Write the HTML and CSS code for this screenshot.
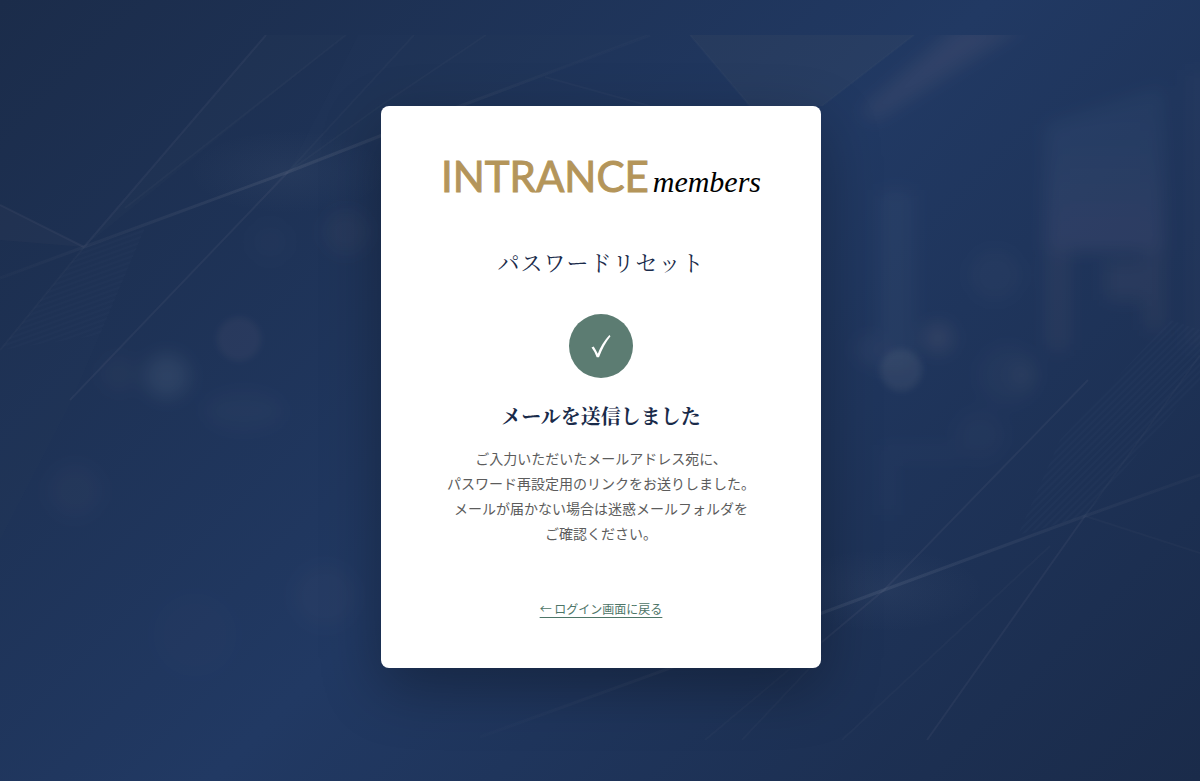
FILE: index.html
```html
<!DOCTYPE html>
<html lang="ja">
<head>
<meta charset="utf-8">
<meta name="viewport" content="width=device-width, initial-scale=1">
<title>パスワードリセット</title>
<link rel="stylesheet" href="styles.css">
</head>
<body>
<div class="page">
  <svg class="backdrop" viewBox="0 0 1200 781" preserveAspectRatio="xMidYMid slice" aria-hidden="true">
    <defs>
      <filter id="soft" x="-50%" y="-50%" width="200%" height="200%"><feGaussianBlur stdDeviation="9"/></filter>
      <filter id="edge" x="-50%" y="-50%" width="200%" height="200%"><feGaussianBlur stdDeviation="3"/></filter>
      <linearGradient id="pane" x1="0" y1="0" x2="0" y2="1"><stop offset="0" stop-color="#6f9cc0" stop-opacity=".05"/><stop offset="1" stop-color="#9a83a5" stop-opacity=".13"/></linearGradient>
      <linearGradient id="ray" gradientUnits="userSpaceOnUse" x1="0" y1="270" x2="560" y2="35"><stop offset="0" stop-color="#c5b8b8" stop-opacity=".02"/><stop offset=".5" stop-color="#c8c4c8" stop-opacity=".1"/><stop offset="1" stop-color="#c5b8b8" stop-opacity=".02"/></linearGradient>
      <linearGradient id="ray2" gradientUnits="userSpaceOnUse" x1="480" y1="740" x2="1200" y2="475"><stop offset="0" stop-color="#c5b8b8" stop-opacity=".01"/><stop offset=".55" stop-color="#c0c4d0" stop-opacity=".1"/><stop offset="1" stop-color="#c5b8b8" stop-opacity=".03"/></linearGradient>
      <radialGradient id="glow"><stop offset="0" stop-color="#b0b8c5" stop-opacity=".05"/><stop offset="1" stop-color="#b0b8c5" stop-opacity="0"/></radialGradient>
      <pattern id="hatchL" width="8" height="5" patternUnits="userSpaceOnUse" patternTransform="rotate(-20)"><path d="M0 1H8" stroke="#b8bccb" stroke-opacity=".018" stroke-width="2"/></pattern>
      <pattern id="hatchR" width="8" height="5" patternUnits="userSpaceOnUse" patternTransform="rotate(-45)"><path d="M0 1H8" stroke="#90a8cb" stroke-opacity=".03" stroke-width="2"/></pattern>
      <clipPath id="scene"><rect y="35" width="1200" height="705"/></clipPath>
    </defs>
    <g clip-path="url(#scene)">
      <path d="M266 35H346L84 247Z" fill="#b8bccb" fill-opacity=".014"/>
      <path d="M358 35H650L380 140 288 172Z" fill="#b8bccb" fill-opacity=".012"/>
      <path d="M690 35H914L822 106H750Z" fill="#b8a880" fill-opacity=".048"/>
      <path d="M0 205L84 247 0 240Z" fill="#b08a9a" fill-opacity=".035"/>
      <path d="M84 247L145 228 72 400 0 540V350Z" fill="#b8bccb" fill-opacity=".012"/>
      <path d="M84 247L145 228 100 335 0 350Z" fill="url(#hatchL)"/>
      <path d="M1170 320L1200 330V380L1085 516 1018 535 1060 440Z" fill="url(#hatchR)"/>
      <ellipse cx="288" cy="172" rx="100" ry="42" fill="url(#glow)"/>
      <ellipse cx="884" cy="590" rx="100" ry="42" fill="url(#glow)"/>
      <g filter="url(#soft)">
        <path d="M860 112L960 25H1025L875 120Z" fill="#b79595" fill-opacity=".1"/>
        <path d="M1046 125L1164 85V250H1046Z" fill="url(#pane)"/>
        <path d="M1048 250H1068V350H1048ZM1105 262H1150V300H1105ZM1145 250H1164V330H1145Z" fill="#b79595" fill-opacity=".07"/>
        <rect x="1185" y="70" width="30" height="280" fill="#ac9ab0" fill-opacity=".03"/>
        <rect x="878" y="190" width="36" height="180" fill="#8799c0" fill-opacity=".06"/>
        <path d="M880 445H960V460H895V515H880Z" fill="#8799c0" fill-opacity=".03"/>
        <circle cx="167" cy="376" r="22" fill="#8aa0b4" fill-opacity=".13"/>
        <circle cx="119" cy="374" r="19" fill="#aa8d9d" fill-opacity=".04"/>
        <ellipse cx="244" cy="411" rx="40" ry="20" fill="#a5a5ad" fill-opacity=".04"/>
        <circle cx="346" cy="232" r="23" fill="#b19090" fill-opacity=".06"/>
        <circle cx="270" cy="242" r="22" fill="#b19090" fill-opacity=".02"/>
        <circle cx="75" cy="491" r="28" fill="#b1a5a0" fill-opacity=".03"/>
        <circle cx="325" cy="596" r="32" fill="#b1a5a0" fill-opacity=".03"/>
        <circle cx="195" cy="635" r="42" fill="#9a88b0" fill-opacity=".015"/>
        <circle cx="995" cy="275" r="26" fill="#b1a5a0" fill-opacity=".035"/>
        <circle cx="938" cy="338" r="15" fill="#b19a9a" fill-opacity=".12"/>
        <circle cx="870" cy="350" r="15" fill="#a090b0" fill-opacity=".06"/>
        <circle cx="1008" cy="375" r="30" fill="#a090b0" fill-opacity=".04"/>
        <circle cx="1022" cy="375" r="11" fill="#b1a590" fill-opacity=".07"/>
        <circle cx="980" cy="435" r="25" fill="#a090b0" fill-opacity=".03"/>
      </g>
      <g filter="url(#edge)">
        <circle cx="239" cy="339" r="22" fill="#b19aa5" fill-opacity=".065"/>
        <circle cx="901" cy="370" r="21" fill="#a5a5a8" fill-opacity=".1"/>
      </g>
      <g fill="none" stroke-width="2" stroke="#c8bdc8" stroke-opacity=".06">
        <path stroke="url(#ray)" stroke-opacity="1" stroke-width="3" d="M0 278L84 247 288 172 380 136 650 35"/>
        <path stroke="url(#ray2)" stroke-opacity="1" stroke-width="3" d="M480 737L822 613 884 590 1085 516 1200 475"/>
        <path d="M266 35L84 247M0 205L84 247M288 172L70 400M1085 516L927 740M822 642L884 590 1088 380"/>
        <path stroke-opacity=".03" d="M690 35L750 106M346 35L125 208M84 247L0 350M414 35L288 172M486 35L380 106 288 172M545 77L650 106M914 35L822 106M822 655L742 740M705 740L822 642M1085 516L1200 553M1085 516L1200 355M1050 546L842 740"/>
      </g>
    </g>
  </svg>
  <main class="card">
    <div class="logo" role="img" aria-label="INTRANCE members">
      <span class="logo-name">INTRANCE</span><span class="logo-sub">members</span>
    </div>
    <h1 class="title">パスワードリセット</h1>
    <div class="badge">
      <svg class="check" viewBox="0 0 24 28" aria-hidden="true"><path d="M2.500 15.500L4.700 14.400Q7 18 8.800 21.800Q12.500 11.500 20.400 3L21.500 4.200Q14.500 13 10 25.200H7.700Q6 20 2.500 15.500Z"/></svg>
    </div>
    <h2 class="subtitle">メールを送信しました</h2>
    <p class="message">ご入力いただいたメールアドレス宛に、<br>パスワード再設定用のリンクをお送りしました。<br>メールが届かない場合は迷惑メールフォルダを<br>ご確認ください。</p>
    <a class="back" href="#">← ログイン画面に戻る</a>
  </main>
</div>
</body>
</html>
```
FILE: styles.css
```css
* { box-sizing: border-box; }

body {
  margin: 0;
  font-family: "Noto Sans CJK JP", sans-serif;
  color: #5c5c5c;
}

.page {
  position: relative;
  display: flex;
  align-items: center;
  justify-content: center;
  min-height: 100vh;
  padding: 0 0 8px 2px;
  overflow: hidden;
  background: linear-gradient(135deg, #1b2c4a 0%, #213963 50%, #1a2b4a 100%);
}

.backdrop {
  position: absolute;
  inset: 0;
  width: 100%;
  height: 100%;
}

.card {
  position: relative;
  display: flex;
  flex-direction: column;
  align-items: center;
  width: 100%;
  max-width: 440px;
  padding: 48px 56px;
  border-radius: 8px;
  background: #fff;
  text-align: center;
  box-shadow: 0 20px 60px rgba(0, 0, 0, 0.3);
}

.logo {
  display: flex;
  align-items: baseline;
  gap: 4px;
  height: 48px;
  line-height: 44px;
  white-space: nowrap;
}

.logo-name {
  font-family: Lato, sans-serif;
  font-size: 42px;
  color: #b4955a;
  -webkit-text-stroke: 1px #b4955a;
}

.logo-sub {
  font-family: "Liberation Serif", serif;
  font-size: 30px;
  font-style: italic;
  color: #000;
}

.title {
  margin: 44px 0 0;
  font-family: "Noto Serif CJK JP", "Noto Serif JP", serif;
  font-size: 22px;
  font-weight: 400;
  line-height: 32px;
  letter-spacing: 1px;
  color: #1a2b4a;
}

.badge {
  display: flex;
  align-items: center;
  justify-content: center;
  width: 64px;
  height: 64px;
  margin-top: 36px;
  border-radius: 50%;
  background: #5c7c72;
}

.check {
  width: 24px;
  height: 28px;
  fill: #fff;
}

.subtitle {
  margin: 24px 0 0;
  font-family: "Noto Serif CJK JP", "Noto Serif JP", serif;
  font-size: 20px;
  font-weight: 700;
  line-height: 28px;
  color: #1a2b4a;
}

.message {
  margin: 16px 0 0;
  font-size: 14px;
  line-height: 25px;
}

.back {
  margin-top: 52px;
  font-size: 12px;
  line-height: 22px;
  color: #4d7567;
  text-decoration: underline;
  text-underline-offset: 3px;
}
```
